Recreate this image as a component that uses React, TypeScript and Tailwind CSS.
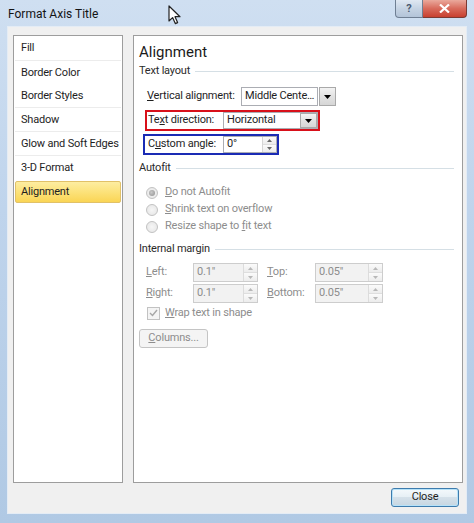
import React from "react";

const FONT = "font-['Roboto','Liberation_Sans',sans-serif]";

function Arrow({ up = false, color = "#000", w = 7, h = 4 }: { up?: boolean; color?: string; w?: number; h?: number }) {
  return (
    <svg width={w} height={h} viewBox={`0 0 ${w} ${h}`}>
      {up ? <path d={`M0 ${h}H${w}L${w / 2} 0z`} fill={color} /> : <path d={`M0 0H${w}L${w / 2} ${h}z`} fill={color} />}
    </svg>
  );
}

function DropBtn() {
  return (
    <div className="w-[17px] self-stretch flex items-center justify-center border border-[#a9a9a9] bg-[linear-gradient(#f3f3f3,#e2e2e2_50%,#d6d6d6)]">
      <Arrow />
    </div>
  );
}

function Spin({ disabled = false }: { disabled?: boolean }) {
  const c = disabled ? "#b8b8b8" : "#6a6a6a";
  return (
    <div className={`w-[14px] self-stretch flex flex-col border-l ${disabled ? "border-[#dcdcdc]" : "border-[#d5d5d5]"}`}>
      <div className="flex-1 flex items-center justify-center border-b border-[#dedede] bg-[linear-gradient(#fbfbfb,#ececec)]">
        <Arrow up color={c} w={5} h={3} />
      </div>
      <div className="flex-1 flex items-center justify-center bg-[linear-gradient(#fbfbfb,#ececec)]">
        <Arrow color={c} w={5} h={3} />
      </div>
    </div>
  );
}

function Section({ label }: { label: string }) {
  return (
    <div className="flex items-center h-[14px] pl-[5px] mr-[8px] text-[#2b2b2b]">
      <span>{label}</span>
      <div className="flex-1 h-px bg-[#d5dfe5] ml-[5px]" />
    </div>
  );
}

function Radio({ checked, children }: { checked?: boolean; children: React.ReactNode }) {
  return (
    <div className="flex items-center h-[17px] pl-[12px] text-[#8d8d8d]">
      <div className="w-[12px] h-[12px] rounded-full border border-[#c2c2c2] bg-[radial-gradient(circle,#f6f6f6,#e4e4e4)] flex items-center justify-center">
        {checked && <div className="w-[6px] h-[6px] rounded-full bg-[radial-gradient(circle_at_40%_40%,#c9c9c9,#8f8f8f)]" />}
      </div>
      <span className="ml-[7px]">{children}</span>
    </div>
  );
}

function MarginBox({ value, w }: { value: string; w: string }) {
  return (
    <div className={`${w} h-[19px] flex border border-[#cdcdcd] bg-[#f2f2f2]`}>
      <div className="flex-1 pl-[3px] flex items-center text-[#8d8d8d]">{value}</div>
      <Spin disabled />
    </div>
  );
}

const items = [
  { t: "Fill", sep: true },
  { t: "Border Color", sep: false },
  { t: "Border Styles", sep: true },
  { t: "Shadow", sep: true },
  { t: "Glow and Soft Edges", sep: true },
  { t: "3-D Format", sep: false },
];

export default function App() {
  return (
    <div className={`${FONT} w-[474px] h-[523px] relative overflow-hidden flex flex-col whitespace-nowrap tracking-[-0.2px] bg-[linear-gradient(180deg,#cfdff1_0%,#bfd4ec_40%,#b0c9e4_100%)] text-[11px] text-[#1e1e1e]`}>
      {/* Title bar */}
      <div className="h-[27px] flex items-start shrink-0">
        <div className="pl-[8px] pt-[6px] text-[12px] text-[#141414] leading-[16px] tracking-normal">Format Axis Title</div>
        <div className="ml-auto mr-[7px] flex">
          <div className="w-[28px] h-[18px] rounded-bl-[4px] border border-t-0 border-[#6f7f93] bg-[linear-gradient(#dfe8f2,#c5d3e3_50%,#b3c4d8)] flex items-center justify-center text-[11px] font-bold text-[#4a5a70] leading-none">
            ?
          </div>
          <div className="w-[44px] h-[18px] rounded-br-[4px] border border-l-0 border-t-0 border-[#7b3a33] bg-[linear-gradient(#eaa99c,#d86b5c_50%,#c8402f)] flex items-center justify-center">
            <svg width="11" height="9" viewBox="0 0 11 9">
              <path d="M1 0.5L5.5 4.5L10 0.5M1 8.5L5.5 4.5L10 8.5" stroke="#fff" strokeWidth="2.2" fill="none" />
            </svg>
          </div>
        </div>
      </div>

      {/* Client area */}
      <div className="mx-[8px] h-[486px] bg-[#f0f0f0] flex flex-col shrink-0 shadow-[0_0_0_1px_#e4ecf5]">
        <div className="flex pt-[8px] pl-[5px] pr-[3px] gap-[10px]">
          {/* Left list */}
          <div className="w-[110px] h-[448px] bg-white border border-[#9d9d9d] flex flex-col">
            {items.map((it) => (
              <div key={it.t} className={`${it.t === "Fill" ? "h-[23px]" : "h-[22px]"} mx-[1px] pl-[6px] pt-[1px] flex items-center ${it.sep ? "border-b border-[#ececec]" : ""} box-content`}>
                {it.t}
              </div>
            ))}
            <div className="mt-[2px] mx-[1px] h-[22px] pl-[5px] pt-[1px] flex items-center rounded-[2px] border border-[#e1c168] bg-[linear-gradient(#fdeda1,#fce27a_50%,#fad555)]">
              Alignment
            </div>
          </div>

          {/* Right pane */}
          <div className="w-[330px] h-[448px] bg-white border border-[#9d9d9d] flex flex-col">
            <div className="mt-[7px] h-[18px] pl-[5px] flex items-center text-[15px] text-[#1b1b1b] tracking-normal">Alignment</div>
            <div className="mt-[3px]">
              <Section label="Text layout" />
            </div>

            <div className="mt-[9px] h-[19px] pl-[13px] flex items-center">
              <span className="w-[94px]">
                <u>V</u>ertical alignment:
              </span>
              <div className="w-[95px] h-[19px] flex">
                <div className="flex-1 h-full border border-[#abadb3] flex items-center pl-[3px] overflow-hidden">Middle Cente…</div>
                <div className="ml-[1px] flex self-stretch">
                  <DropBtn />
                </div>
              </div>
            </div>

            <div className="mt-[4px] ml-[11px] w-[175px] h-[21px] border-2 border-[#d8101a] flex items-center">
              <span className="w-[76px] pl-[1px]">
                Te<u>x</u>t direction:
              </span>
              <div className="flex-1 h-full flex border border-[#abadb3]">
                <div className="flex-1 flex items-center pl-[3px]">Horizontal</div>
                <DropBtn />
              </div>
            </div>

            <div className="mt-[3px] ml-[9px] w-[136px] h-[21px] border-2 border-[#1a2bb4] flex items-center">
              <span className="w-[78px] pl-[3px]">
                C<u>u</u>stom angle:
              </span>
              <div className="flex-1 h-full flex border border-[#abadb3]">
                <div className="flex-1 flex items-center pl-[3px]">0°</div>
                <Spin />
              </div>
            </div>

            <div className="mt-[6px]">
              <Section label="Autofit" />
            </div>
            <div className="mt-[9px]">
              <Radio checked>
                <u>D</u>o not Autofit
              </Radio>
              <Radio>
                <u>S</u>hrink text on overflow
              </Radio>
              <Radio>
                Resize shape to <u>f</u>it text
              </Radio>
            </div>

            <div className="mt-[7px]">
              <Section label="Internal margin" />
            </div>

            <div className="mt-[7px] h-[19px] pl-[12px] flex items-center text-[#8d8d8d]">
              <span className="w-[47px]">
                <u>L</u>eft:
              </span>
              <MarginBox value={'0.1"'} w="w-[65px]" />
              <span className="ml-[9px] w-[48px]">
                <u>T</u>op:
              </span>
              <MarginBox value={'0.05"'} w="w-[68px]" />
            </div>
            <div className="mt-[2px] h-[19px] pl-[12px] flex items-center text-[#8d8d8d]">
              <span className="w-[47px]">
                <u>R</u>ight:
              </span>
              <MarginBox value={'0.1"'} w="w-[65px]" />
              <span className="ml-[9px] w-[48px]">
                <u>B</u>ottom:
              </span>
              <MarginBox value={'0.05"'} w="w-[68px]" />
            </div>

            <div className="mt-[2px] h-[16px] pl-[13px] flex items-center text-[#8d8d8d]">
              <div className="w-[13px] h-[13px] border border-[#c2c2c2] bg-[#f4f4f4] flex items-center justify-center">
                <svg width="9" height="8" viewBox="0 0 9 8">
                  <path d="M1 4L3.5 6.5L8 1" stroke="#a6a6a6" strokeWidth="1.4" fill="none" />
                </svg>
              </div>
              <span className="ml-[5px]">
                <u>W</u>rap text in shape
              </span>
            </div>

            <div className="mt-[8px] ml-[5px] w-[69px] h-[19px] rounded-[3px] border border-[#c4c4c4] bg-[#f4f4f4] flex items-center justify-center text-[#8d8d8d]">
              <span>
                <u>C</u>olumns...
              </span>
            </div>
          </div>
        </div>

        <div className="flex justify-end pr-[7px] mt-[5px]">
          <div className="w-[68px] h-[19px] rounded-[3px] border border-[#3d7bad] shadow-[inset_0_0_0_1px_#b6e2f9] bg-[linear-gradient(#f4f9fc,#e6eff5_50%,#d5e1ea_50%,#c7d6e1)] flex items-center justify-center text-[#1e1e1e]">
            Close
          </div>
        </div>
      </div>

      {/* Mouse cursor */}
      <svg className="absolute left-[168px] top-[5px] blur-[0.4px]" width="13" height="20" viewBox="0 0 13 20">
        <path d="M1 1V16L4.6 12.6L7.3 18.6L9.6 17.6L7 11.7H12Z" fill="#fff" stroke="#222" strokeWidth="1.2" strokeLinejoin="round" />
      </svg>
    </div>
  );
}
